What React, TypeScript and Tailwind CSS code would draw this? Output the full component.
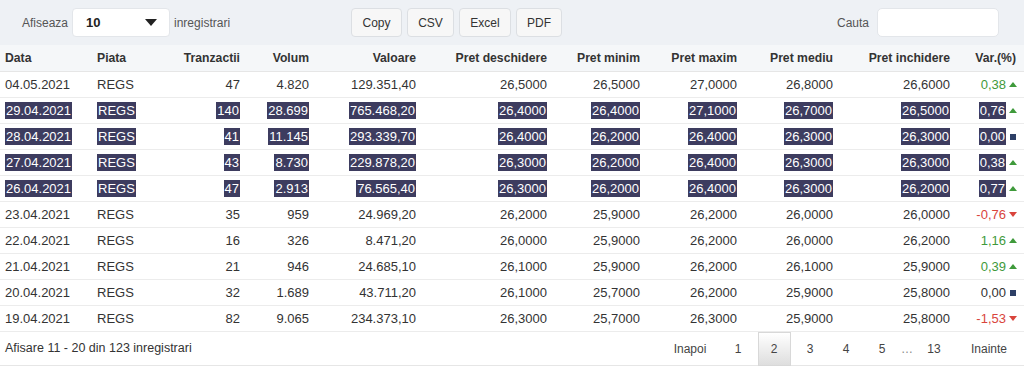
import React from "react";

type Row = {
  d: string; t: string; v: string; val: string; pd: string; pmin: string; pmax: string; pmed: string; pi: string; vr: string; dir: "up" | "down" | "flat"; sel?: boolean;
};

const rows: Row[] = [
  { d: "04.05.2021", t: "47", v: "4.820", val: "129.351,40", pd: "26,5000", pmin: "26,5000", pmax: "27,0000", pmed: "26,8000", pi: "26,6000", vr: "0,38", dir: "up" },
  { d: "29.04.2021", t: "140", v: "28.699", val: "765.468,20", pd: "26,4000", pmin: "26,4000", pmax: "27,1000", pmed: "26,7000", pi: "26,5000", vr: "0,76", dir: "up", sel: true },
  { d: "28.04.2021", t: "41", v: "11.145", val: "293.339,70", pd: "26,4000", pmin: "26,2000", pmax: "26,4000", pmed: "26,3000", pi: "26,3000", vr: "0,00", dir: "flat", sel: true },
  { d: "27.04.2021", t: "43", v: "8.730", val: "229.878,20", pd: "26,3000", pmin: "26,2000", pmax: "26,4000", pmed: "26,3000", pi: "26,3000", vr: "0,38", dir: "up", sel: true },
  { d: "26.04.2021", t: "47", v: "2.913", val: "76.565,40", pd: "26,3000", pmin: "26,2000", pmax: "26,4000", pmed: "26,3000", pi: "26,2000", vr: "0,77", dir: "up", sel: true },
  { d: "23.04.2021", t: "35", v: "959", val: "24.969,20", pd: "26,2000", pmin: "25,9000", pmax: "26,2000", pmed: "26,0000", pi: "26,0000", vr: "-0,76", dir: "down" },
  { d: "22.04.2021", t: "16", v: "326", val: "8.471,20", pd: "26,0000", pmin: "25,9000", pmax: "26,2000", pmed: "26,0000", pi: "26,2000", vr: "1,16", dir: "up" },
  { d: "21.04.2021", t: "21", v: "946", val: "24.685,10", pd: "26,1000", pmin: "25,9000", pmax: "26,2000", pmed: "26,1000", pi: "25,9000", vr: "0,39", dir: "up" },
  { d: "20.04.2021", t: "32", v: "1.689", val: "43.711,20", pd: "26,1000", pmin: "25,7000", pmax: "26,2000", pmed: "25,9000", pi: "25,8000", vr: "0,00", dir: "flat" },
  { d: "19.04.2021", t: "82", v: "9.065", val: "234.373,10", pd: "26,3000", pmin: "25,7000", pmax: "26,3000", pmed: "25,9000", pi: "25,8000", vr: "-1,53", dir: "down" },
];

const grid = "grid grid-cols-[92px_78px_75px_69px_107px_131px_93px_97px_96px_117px_69px]";

function T({ children, sel }: { children: React.ReactNode; sel?: boolean }) {
  if (!sel) return <span>{children}</span>;
  return <span className="inline-block bg-[#3d3c5f] text-white leading-[17px] px-[1px]">{children}</span>;
}

function Arrow({ dir }: { dir: Row["dir"] }) {
  if (dir === "up")
    return (
      <svg width="8" height="5" viewBox="0 0 8 5" className="ml-[3px]">
        <polygon points="0,5 8,5 4,0" fill="#3f9a3b" />
      </svg>
    );
  if (dir === "down")
    return (
      <svg width="8" height="5" viewBox="0 0 8 5" className="ml-[3px]">
        <polygon points="0,0 8,0 4,5" fill="#d9443c" />
      </svg>
    );
  return <span className="ml-[4px] mr-[1px] inline-block w-[6px] h-[6px] bg-[#2e3f66]" />;
}

export default function App() {
  const cellL = "px-[5px] flex items-center";
  const cellR = "px-[5px] flex items-center justify-end";
  return (
    <div className="w-[1024px] h-[366px] bg-white text-[13px] text-[#333] overflow-hidden" style={{ fontFamily: '"Liberation Sans", Arial, sans-serif' }}>
      {/* top bar */}
      <div className="h-[45px] bg-[#eef1f5] flex items-center text-[12px]">
        <div className="flex items-center w-[350px]">
          <span className="ml-[22px] text-[#555]">Afiseaza</span>
          <div className="ml-[4px] w-[98px] h-[29px] bg-white rounded-[4px] border border-[#e3e6ea] flex items-center justify-between pl-[13px] pr-[12px]">
            <span className="font-bold text-[13px] text-[#222]">10</span>
            <svg width="12" height="7" viewBox="0 0 12 7"><polygon points="0,0 12,0 6,7" fill="#222" /></svg>
          </div>
          <span className="ml-[4px] text-[#555]">inregistrari</span>
        </div>
        <div className="flex items-center gap-[5px] ml-[1px]">
          {["Copy", "CSV", "Excel", "PDF"].map((b, i) => (
            <div key={b} className={`h-[29px] ${["w-[51px]", "w-[47px]", "w-[52px]", "w-[46px]"][i]} flex items-center justify-center bg-[#f7f7f7] border border-[#dcdfe3] rounded-[4px] text-[#333]`}>
              {b}
            </div>
          ))}
        </div>
        <div className="ml-auto flex items-center mr-[25px]">
          <span className="text-[#555] mr-[8px]">Cauta</span>
          <div className="w-[122px] h-[29px] bg-white rounded-[5px] border border-[#e3e6ea]" />
        </div>
      </div>

      {/* header */}
      <div className={`${grid} h-[27px] bg-[#f5f7f9] font-bold text-[12.2px] text-[#333] border-b border-[#e6e6e6]`}>
        <div className={cellL}>Data</div>
        <div className={cellL}>Piata</div>
        <div className={cellR}>Tranzactii</div>
        <div className={cellR}>Volum</div>
        <div className={cellR}>Valoare</div>
        <div className={cellR}>Pret deschidere</div>
        <div className={cellR}>Pret minim</div>
        <div className={cellR}>Pret maxim</div>
        <div className={cellR}>Pret mediu</div>
        <div className={cellR}>Pret inchidere</div>
        <div className={`${cellR} pr-[8px]`}>Var.(%)</div>
      </div>

      {/* rows */}
      {rows.map((r, i) => {
        const color = r.dir === "up" ? "text-[#3f9a3b]" : r.dir === "down" ? "text-[#d9443c]" : "text-[#333]";
        return (
          <div key={i} className={`${grid} h-[26px] border-b border-[#ececec]`}>
            <div className={cellL}><T sel={r.sel}>{r.d}</T></div>
            <div className={cellL}><T sel={r.sel}>REGS</T></div>
            <div className={cellR}><T sel={r.sel}>{r.t}</T></div>
            <div className={cellR}><T sel={r.sel}>{r.v}</T></div>
            <div className={cellR}><T sel={r.sel}>{r.val}</T></div>
            <div className={cellR}><T sel={r.sel}>{r.pd}</T></div>
            <div className={cellR}><T sel={r.sel}>{r.pmin}</T></div>
            <div className={cellR}><T sel={r.sel}>{r.pmax}</T></div>
            <div className={cellR}><T sel={r.sel}>{r.pmed}</T></div>
            <div className={cellR}><T sel={r.sel}>{r.pi}</T></div>
            <div className={`${cellR} pr-[7px]`}>
              <span className={r.sel ? "" : color}><T sel={r.sel}>{r.vr}</T></span>
              <Arrow dir={r.dir} />
            </div>
          </div>
        );
      })}

      {/* footer */}
      <div className="h-[34px] flex items-center border-b border-[#e6e6e6] text-[12px]">
        <span className="ml-[5px] text-[#333] text-[12.5px]">Afisare 11 - 20 din 123 inregistrari</span>
        <div className="ml-auto flex items-stretch h-[34px] text-[#444]">
          <div className="w-[60px] flex items-center justify-center">Inapoi</div>
          <div className="w-[36px] flex items-center justify-center">1</div>
          <div className="w-[36px] flex items-center justify-center">
            <div className="w-[33px] h-[34px] flex items-center justify-center bg-gradient-to-b from-white to-[#dedede] border border-[#d8d8d8]">2</div>
          </div>
          <div className="w-[36px] flex items-center justify-center">3</div>
          <div className="w-[36px] flex items-center justify-center">4</div>
          <div className="w-[36px] flex items-center justify-center">5</div>
          <div className="w-[14px] flex items-center justify-center text-[#888]">…</div>
          <div className="w-[40px] flex items-center justify-center">13</div>
          <div className="w-[70px] flex items-center justify-center">Inainte</div>
        </div>
      </div>
    </div>
  );
}
